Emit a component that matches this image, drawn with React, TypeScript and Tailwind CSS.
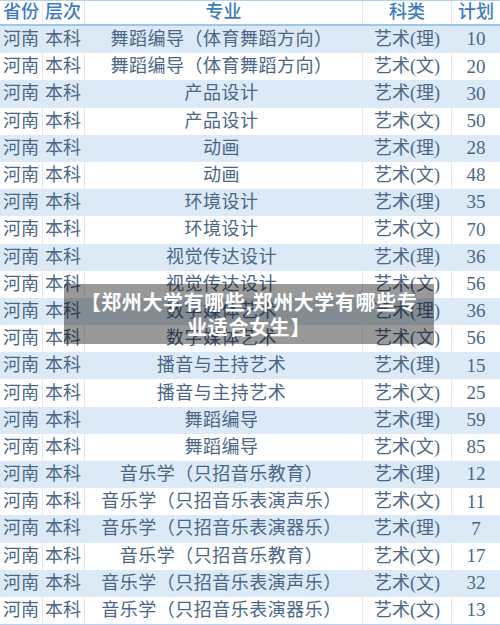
import React from 'react';

type Row = [string, string, string, string, string];

const rows: Row[] = [
	['河南', '本科', '舞蹈编导（体育舞蹈方向）', '艺术(理)', '10'],
	['河南', '本科', '舞蹈编导（体育舞蹈方向）', '艺术(文)', '20'],
	['河南', '本科', '产品设计', '艺术(理)', '30'],
	['河南', '本科', '产品设计', '艺术(文)', '50'],
	['河南', '本科', '动画', '艺术(理)', '28'],
	['河南', '本科', '动画', '艺术(文)', '48'],
	['河南', '本科', '环境设计', '艺术(理)', '35'],
	['河南', '本科', '环境设计', '艺术(文)', '70'],
	['河南', '本科', '视觉传达设计', '艺术(理)', '36'],
	['河南', '本科', '视觉传达设计', '艺术(文)', '56'],
	['河南', '本科', '数字媒体艺术', '艺术(理)', '36'],
	['河南', '本科', '数字媒体艺术', '艺术(文)', '56'],
	['河南', '本科', '播音与主持艺术', '艺术(理)', '15'],
	['河南', '本科', '播音与主持艺术', '艺术(文)', '25'],
	['河南', '本科', '舞蹈编导', '艺术(理)', '59'],
	['河南', '本科', '舞蹈编导', '艺术(文)', '85'],
	['河南', '本科', '音乐学（只招音乐教育）', '艺术(理)', '12'],
	['河南', '本科', '音乐学（只招音乐表演声乐）', '艺术(文)', '11'],
	['河南', '本科', '音乐学（只招音乐表演器乐）', '艺术(理)', '7'],
	['河南', '本科', '音乐学（只招音乐教育）', '艺术(文)', '17'],
	['河南', '本科', '音乐学（只招音乐表演声乐）', '艺术(文)', '32'],
	['河南', '本科', '音乐学（只招音乐表演器乐）', '艺术(文)', '13'],
];

const cols = 'grid grid-cols-[43px_42px_278px_89px_48px]';
const cell = 'border-r border-[#e3e8ee] last:border-r-0 flex items-center whitespace-nowrap overflow-hidden';

export default function App() {
	return (
		<div
			className="relative w-[500px] h-[625px] overflow-hidden bg-white"
			style={{ fontFamily: '"Liberation Serif", "Noto Sans CJK SC", serif' }}
		>
			<div className="border-t border-[#b4d2ee]">
				{/* header */}
				<div className={`${cols} h-[25px] border-b-2 border-[#9ec5ea] text-[18px] text-[#3e7cc0] font-medium`}>
					<div className={`${cell} pl-[3px]`}>省份</div>
					<div className={`${cell} pl-[2px]`}>层次</div>
					<div className={`${cell} justify-center`}>专业</div>
					<div className={`${cell} justify-center`}>科类</div>
					<div className={`${cell} justify-center`}>计划</div>
				</div>

				{rows.map((r, i) => (
					<div
						key={i}
						className={`${cols} h-[27.2px] text-[18px] text-[#4a6788] ${i % 2 === 0 ? 'bg-[#dce9f6]' : 'bg-white'}`}
					>
						<div className={`${cell} pl-[3px]`}>{r[0]}</div>
						<div className={`${cell} pl-[2px]`}>{r[1]}</div>
						<div className={`${cell} justify-center pr-[4px] tracking-[0.5px]`}>{r[2]}</div>
						<div className={`${cell} justify-center`}>{r[3]}</div>
						<div className={`${cell} justify-center text-[19px]`}>{r[4]}</div>
					</div>
				))}
				<div className="border-t border-[#b4d2ee]" />
			</div>

			{/* title overlay */}
			<div className="absolute left-[64px] top-[284px] w-[370px] h-[60px] bg-black/40 flex items-center justify-center">
				<p
					className="text-white font-bold text-[20px] leading-[25px] tracking-[0.6px] text-center px-[10px]"
					style={{ fontFamily: '"Noto Sans CJK SC", sans-serif' }}
				>
					【郑州大学有哪些,郑州大学有哪些专业适合女生】
				</p>
			</div>
		</div>
	);
}
